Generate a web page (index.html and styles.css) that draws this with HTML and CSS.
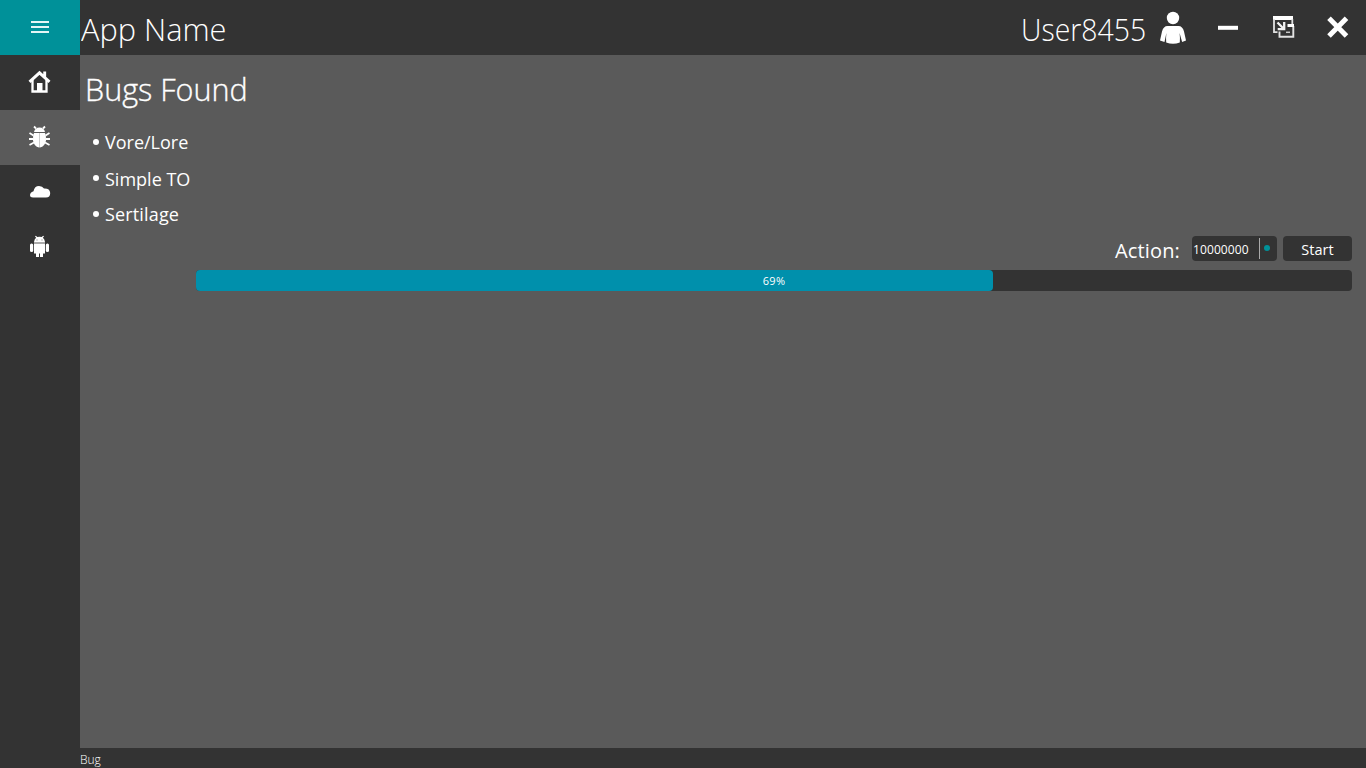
FILE: index.html
```html
<!DOCTYPE html>
<html lang="en">
<head>
<meta charset="utf-8">
<title>App Name</title>
<link rel="stylesheet" href="styles.css">
</head>
<body>
<div class="app">
  <nav class="sidebar">
    <button class="nav menu" aria-label="Menu"><svg width="80" height="55"><path d="M31 22h18M31 27h18M31 32h18" stroke="#e4f6f6" stroke-width="2"/></svg></button>
    <button class="nav" aria-label="Home"><svg width="80" height="55"><path d="M29.500 26.800 39.500 17.800l10 9M44.700 16.500v6" fill="none" stroke="#fff" stroke-width="2.900"/><path d="M32.500 25V36.500h14V25" fill="none" stroke="#fff" stroke-width="2.300"/><path d="M37 37v-9h5.500v9z" fill="#fff"/></svg></button>
    <button class="nav active" aria-label="Bugs"><svg width="80" height="55"><g fill="#fff"><path d="M34 22q1-4.500 5.500-4.500T45 22z"/><path d="M34 23h5v14.500q-5-1-6-7Q32.500 26 34 23zM40 23h5q1.500 3 1 7.500-1 6-6 7z"/></g><path d="M39.500 23v14.500" stroke="#ccc"/><path d="M36 18.500l-2-2M43 18.500l2-2M33.500 25.500l-4-2.500M33 29h-4M34 32.500l-4.500 2.500M45.500 25.500l4-2.500M46 29h4M45 32.500l4.500 2.500" stroke="#fff" stroke-width="1.800"/></svg></button>
    <button class="nav" aria-label="Cloud"><svg width="80" height="55"><path d="M33 32.500q-3 0-3-2.500 0-2.500 3.500-3.800Q34.500 21 39 21q3.500 0 5 2.600 5.800-.3 6.200 4.400 0 4.500-4.200 4.500z" fill="#fff"/></svg></button>
    <button class="nav" aria-label="Android"><svg width="80" height="55"><g fill="#fff"><path d="M34 22q.5-3.500 2.200-4.200L35 16.500l.8-.7 1.500 1.300q2.200-.7 4.400 0l1.500-1.300.8.700-1.200 1.300Q44.500 18.500 45 22z"/><path d="M34 24h11v9.500h-2V37h-3v-3.500h-1V37h-3v-3.500h-2z"/><rect x="30" y="23.500" width="3.200" height="8.500" rx="1.500"/><rect x="45.800" y="23.500" width="3.200" height="8.500" rx="1.500"/></g><path d="M34 23h11" stroke="#aaa" stroke-width="2"/><path d="M36.500 20h1M41.500 20h1" stroke="#777"/></svg></button>
  </nav>
  <header class="titlebar">
    <h1 class="title"><span class="app-name">App Name</span></h1>
    <span class="user">User8455</span>
    <svg class="controls" width="220" height="55">
      <g fill="#fff"><ellipse cx="27" cy="18" rx="6.200" ry="6.200"/><path d="M21.500 26h11q4 0 5.500 5.500l2 9-3.900 1.500-2.500-9q.6 5 .2 9.500-6.800 2.500-13.600 0-.4-4.500.2-9.500l-1.900 9-4.500-1.500 2-9Q17.500 26 21.500 26z"/></g>
      <path d="M72 27.800h20" stroke="#fff" stroke-width="4"/>
      <path d="M127 16h20v4h-20z" fill="#fff"/>
      <path d="M128 19v13.200h3.500M146.300 19v5" fill="none" stroke="#e2e2e2" stroke-width="1.800"/>
      <path d="M133.500 31.500v5.300h13.800V26" fill="none" stroke="#e2e2e2" stroke-width="1.900"/>
      <path d="M141.500 25.500h6.500" stroke="#fff" stroke-width="3"/>
      <path d="M140 32.300h4" stroke="#c8c8c8" stroke-width="1.500"/>
      <path d="M131.500 22.500l6.500 6.500M138.200 22v7.200h-6.500" fill="none" stroke="#f2f2f2" stroke-width="2.300"/>
      <path d="M183 18.300 200.500 36M200.500 18.300 183 36" stroke="#fff" stroke-width="5"/>
    </svg>
  </header>
  <main class="content">
    <h2 class="heading"><span>Bugs Found</span></h2>
    <ul class="bugs">
      <li><i class="dot"></i><span>Vore/Lore</span></li>
      <li><i class="dot"></i><span>Simple TO</span></li>
      <li><i class="dot"></i><span class="wide">Sertilage</span></li>
    </ul>
    <div class="actions">
      <label class="label">Action:</label>
      <div class="field"><span class="value">10000000</span><i class="divider"></i><i class="knob"></i></div>
      <button class="start">Start</button>
    </div>
    <div class="progress"><div class="bar" style="width:797px"></div><span class="percent">69%</span></div>
  </main>
  <footer class="status">Bug</footer>
</div>
</body>
</html>
```
FILE: styles.css
```css
* { box-sizing: border-box; }
body { margin: 0; overflow: hidden; background: #333; color: #fff; font-family: "Open Sans", "Noto Sans", sans-serif; }
.app { width: 1366px; height: 768px; display: grid; grid-template: 55px 693px 20px / 80px 1286px; }
.sidebar { grid-row: 1 / 4; background: #333; }
button { border: 0; padding: 0; color: inherit; font-family: inherit; }
.nav { display: block; width: 80px; height: 55px; background: #333; }
.nav svg { display: block; }
.menu { background: #009199; }
.active { background: #5a5a5a; }
.titlebar { display: flex; background: #333; }
h1, h2 { margin: 0; font-size: 32px; font-weight: 300; white-space: nowrap; }
.title { flex: 1; padding-left: 1px; line-height: 57px; }
.app-name { display: inline-block; transform: scaleX(.96); transform-origin: left; }
.user { width: 125px; font-size: 32px; font-weight: 300; line-height: 57px; white-space: nowrap; transform: scaleX(.887); transform-origin: left; }
.controls { display: block; flex: none; }
.content { background: #5a5a5a; padding-right: 14px; }
.heading { height: 69px; padding-left: 5px; line-height: 68px; -webkit-text-stroke: .35px #fff; }
.heading span { display: inline-block; transform: scaleX(.955); transform-origin: left; }
.bugs { margin: 0; padding: 0 0 0 14px; list-style: none; height: 111px; }
.bugs li { display: flex; align-items: center; height: 36px; font-size: 18px; line-height: 36px; }
.bugs li + li span { padding-top: 2px; }
.bugs li:last-child { height: 35px; line-height: 35px; }
.wide { letter-spacing: .15px; }
.dot { width: 6px; height: 6px; border-radius: 50%; background: #fff; margin: 0 6px 0 -1px; }
.actions { display: flex; justify-content: flex-end; height: 26px; margin-top: 1px; }
.label { width: 77px; font-size: 20px; line-height: 30px; letter-spacing: .15px; white-space: nowrap; }
.field { width: 85px; height: 25px; border-radius: 4px; background: #333; display: flex; align-items: center; padding-left: 1px; margin-right: 6px; }
.value { width: 66px; font-size: 12px; line-height: 25px; padding-top: 2px; letter-spacing: .1px; }
.divider { width: 1px; height: 21px; background: #aaa; }
.knob { width: 6px; height: 6px; border-radius: 50%; background: #009199; margin: 0 0 1px 4px; }
.start { width: 69px; height: 25px; border-radius: 4px; background: #333; font-size: 14.500px; line-height: 23px; padding-top: 2px; }
.progress { display: grid; width: 1156px; height: 21px; margin: 8px 0 0 116px; border-radius: 4px; background: #333; }
.bar { grid-area: 1 / 1; height: 21px; border-radius: 4px; background: #0090ac; }
.percent { grid-area: 1 / 1; font-size: 11px; line-height: 21px; text-align: center; letter-spacing: .3px; }
.status { background: #333; font-size: 12px; font-weight: 300; line-height: 23px; }
```
